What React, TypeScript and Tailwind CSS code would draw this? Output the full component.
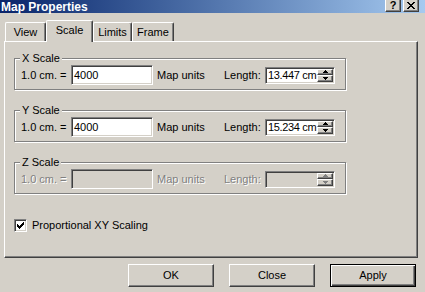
import React from "react";

const FONT = "font-['Liberation_Sans',Arial,sans-serif]";

function SunkenBox({ w, h, disabled, children }: { w: string; h: string; disabled?: boolean; children?: React.ReactNode }) {
  return (
    <div
      className={`${w} ${h} flex items-center border-t border-l border-t-[#808080] border-l-[#808080] border-b border-r border-b-white border-r-white shadow-[inset_1px_1px_0_#404040,inset_-1px_-1px_0_#d4d0c8] ${disabled ? "bg-[#d4d0c8]" : "bg-white"}`}
    >
      {children}
    </div>
  );
}

function Arrow({ up, disabled }: { up?: boolean; disabled?: boolean }) {
  return (
    <svg width="5" height="3" viewBox="0 0 5 3" className="block">
      {up ? (
        <path d="M2 0h1v1h1v1h1v1H0V2h1V1h1z" fill={disabled ? "#808080" : "#000"} />
      ) : (
        <path d="M0 0h5v1H4v1H3v1H2V2H1V1H0z" fill={disabled ? "#808080" : "#000"} />
      )}
    </svg>
  );
}

function SpinBtn({ up, disabled }: { up?: boolean; disabled?: boolean }) {
  return (
    <div className="flex-1 flex items-center justify-center bg-[#d4d0c8] border-t border-l border-t-white border-l-white border-b border-r border-b-[#404040] border-r-[#404040] shadow-[inset_-1px_-1px_0_#808080]">
      <Arrow up={up} disabled={disabled} />
    </div>
  );
}

function LengthBox({ value, disabled }: { value?: string; disabled?: boolean }) {
  return (
    <div className="w-[70px] h-[17px] flex border-t border-l border-t-[#808080] border-l-[#808080] border-b border-r border-b-white border-r-white shadow-[inset_1px_1px_0_#404040,inset_-1px_-1px_0_#d4d0c8]">
      <div
        className={`flex-1 min-w-0 whitespace-nowrap flex items-center pl-[1px] ml-px mt-px mb-px ${
          disabled ? "bg-[#d4d0c8]" : "bg-white"
        } text-black leading-none tracking-[-0.35px]`}
      >
        {value}
      </div>
      <div className="w-[16px] shrink-0 flex flex-col mt-px mb-px mr-px">
        <SpinBtn up disabled={disabled} />
        <SpinBtn disabled={disabled} />
      </div>
    </div>
  );
}

function Group({
  label,
  value,
  length,
  disabled,
  className,
}: {
  label: string;
  value?: string;
  length?: string;
  disabled?: boolean;
  className?: string;
}) {
  const txt = disabled ? "text-[#808080] [text-shadow:1px_1px_0_#fff]" : "text-black";
  return (
    <div
      className={`relative ml-[9px] w-[332px] h-[32px] border border-[#808080] shadow-[inset_1px_1px_0_#fff,1px_1px_0_#fff] ${className ?? ""}`}
    >
      <span className="absolute -top-[7px] left-[5px] px-[2px] bg-[#d4d0c8] leading-[13px] text-black">{label}</span>
      <div className="flex items-center pt-[6px] pl-[6px] h-[26px] whitespace-nowrap">
        <span className={`w-[50px] shrink-0 leading-none ${txt}`}>1.0 cm. =</span>
        <SunkenBox w="w-[82px] shrink-0" h="h-[20px]" disabled={disabled}>
          <span className="pl-[2px] leading-none">{value}</span>
        </SunkenBox>
        <span className={`ml-[4px] w-[67px] shrink-0 leading-none ${txt}`}>Map units</span>
        <span className={`w-[41px] shrink-0 leading-none ${txt}`}>Length:</span>
        <LengthBox value={length} disabled={disabled} />
      </div>
    </div>
  );
}

function Tab({ label, selected, w }: { label: string; selected?: boolean; w: string }) {
  return (
    <div
      className={`${w} flex items-center justify-center bg-[#d4d0c8] border-t border-l border-t-white border-l-white border-r border-r-[#404040] rounded-tl-[2px] rounded-tr-[2px] shadow-[inset_-1px_0_0_#808080] ${
        selected ? "h-[22px] -mb-px relative z-10 pb-[2px]" : "h-[19px]"
      }`}
    >
      <span className="leading-none">{label}</span>
    </div>
  );
}

function Button({ label, def, ml }: { label: string; def?: boolean; ml?: string }) {
  return (
    <div
      className={`${ml ?? ""} w-[86px] h-[23px] flex items-center justify-center bg-[#d4d0c8] ${
        def
          ? "border border-black shadow-[inset_1px_1px_0_#fff,inset_-1px_-1px_0_#404040,inset_-2px_-2px_0_#808080]"
          : "border-t border-l border-t-white border-l-white border-b border-r border-b-[#404040] border-r-[#404040] shadow-[inset_-1px_-1px_0_#808080]"
      }`}
    >
      <span className="leading-none">{label}</span>
    </div>
  );
}

function TitleBtn({ children }: { children: React.ReactNode }) {
  return (
    <div className="w-[16px] h-[12px] flex items-center justify-center bg-[#d4d0c8] border-l border-l-white border-b border-r border-b-[#404040] border-r-[#404040] shadow-[inset_-1px_-1px_0_#808080]">
      {children}
    </div>
  );
}

export default function App() {
  return (
    <div className={`w-[425px] h-[292px] overflow-hidden bg-[#d4d0c8] text-[11px] text-black ${FONT}`}>
      {/* Title bar */}
      <div className="h-[13px] flex items-start bg-linear-to-r from-[#0a246a] to-[#a6caf0]">
        <span className="pl-px text-white font-bold text-[12px] leading-[11px] self-end">Map Properties</span>
        <div className="ml-auto mr-[6px] flex gap-[2px]">
          <TitleBtn>
            <span className="font-bold text-[11px] leading-none mt-[-1px]">?</span>
          </TitleBtn>
          <TitleBtn>
            <svg width="8" height="7" viewBox="0 0 8 7">
              <path d="M0 0h2v1h1v1h2V1h1V0h2v1H7v1H6v1H5v1h1v1h1v1h1v1H6V6H5V5H3v1H2v1H0V6h1V5h1V4h1V3H2V2H1V1H0z" fill="#000" />
            </svg>
          </TitleBtn>
        </div>
      </div>

      {/* Tabs */}
      <div className="h-[28px] flex items-end pl-[5px]">
        <Tab label="View" w="w-[41px]" />
        <Tab label="Scale" w="w-[47px]" selected />
        <Tab label="Limits" w="w-[39px]" />
        <Tab label="Frame" w="w-[42px]" />
      </div>

      {/* Panel */}
      <div className="ml-[4px] w-[414px] h-[217px] border-t border-l border-t-white border-l-white border-b border-r border-b-[#404040] border-r-[#404040] shadow-[inset_-1px_-1px_0_#808080] flex flex-col">
        <Group label="X Scale" value="4000" length="13.447 cm" className="mt-[16px]" />
        <Group label="Y Scale" value="4000" length="15.234 cm" className="mt-[20px]" />
        <Group label="Z Scale" disabled className="mt-[20px]" />
        <div className="mt-[25px] ml-[9px] flex items-center gap-[5px]">
          <div className="w-[13px] h-[13px] bg-white flex items-center justify-center border-t border-l border-t-[#808080] border-l-[#808080] border-b border-r border-b-white border-r-white shadow-[inset_1px_1px_0_#404040,inset_-1px_-1px_0_#d4d0c8]">
            <svg width="7" height="7" viewBox="0 0 7 7">
              <path d="M6 0h1v3H6v1H5v1H4v1H3v1H2V6H1V5H0V2h1v1h1v1h1V3h1V2h1V1h1z" fill="#000" />
            </svg>
          </div>
          <span className="leading-none">Proportional XY Scaling</span>
        </div>
      </div>

      {/* Buttons */}
      <div className="mt-[6px] flex">
        <Button label="OK" ml="ml-[128px]" />
        <Button label="Close" ml="ml-[15px]" />
        <Button label="Apply" def ml="ml-[15px]" />
      </div>
    </div>
  );
}
